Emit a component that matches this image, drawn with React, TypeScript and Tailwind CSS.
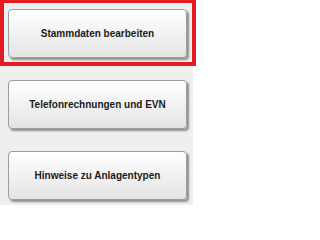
import React from "react";

const items = ["Stammdaten bearbeiten", "Telefonrechnungen und EVN", "Hinweise zu Anlagentypen"];

const MenuButton: React.FC<{ label: string }> = ({ label }) => (
    <button
        className="w-[179px] h-[49px] rounded-[4px] border border-[#9c9c9c] bg-gradient-to-b from-[#ffffff] to-[#e4e4e4] shadow-[2px_2px_2px_rgba(0,0,0,0.4)] flex items-center justify-center text-[10px] font-bold text-[#1a1a1a]"
        style={{ fontFamily: "'Liberation Sans', Arial, sans-serif" }}
    >
        {label}
    </button>
);

export default function App() {
    return (
        <div className="w-[200px] h-[213px] bg-white">
            <div className="relative w-[193px] h-[205px] bg-[#efefef] flex flex-col gap-[22px] pl-[8px] pt-[9px]">
                {items.map((label) => (
                    <MenuButton key={label} label={label} />
                ))}
                {/* red selection frame */}
                <div className="absolute left-0 top-0 w-[196px] h-[66px] border-[4px] border-t-[3px] border-[#e31b23] pointer-events-none" />
            </div>
        </div>
    );
}
